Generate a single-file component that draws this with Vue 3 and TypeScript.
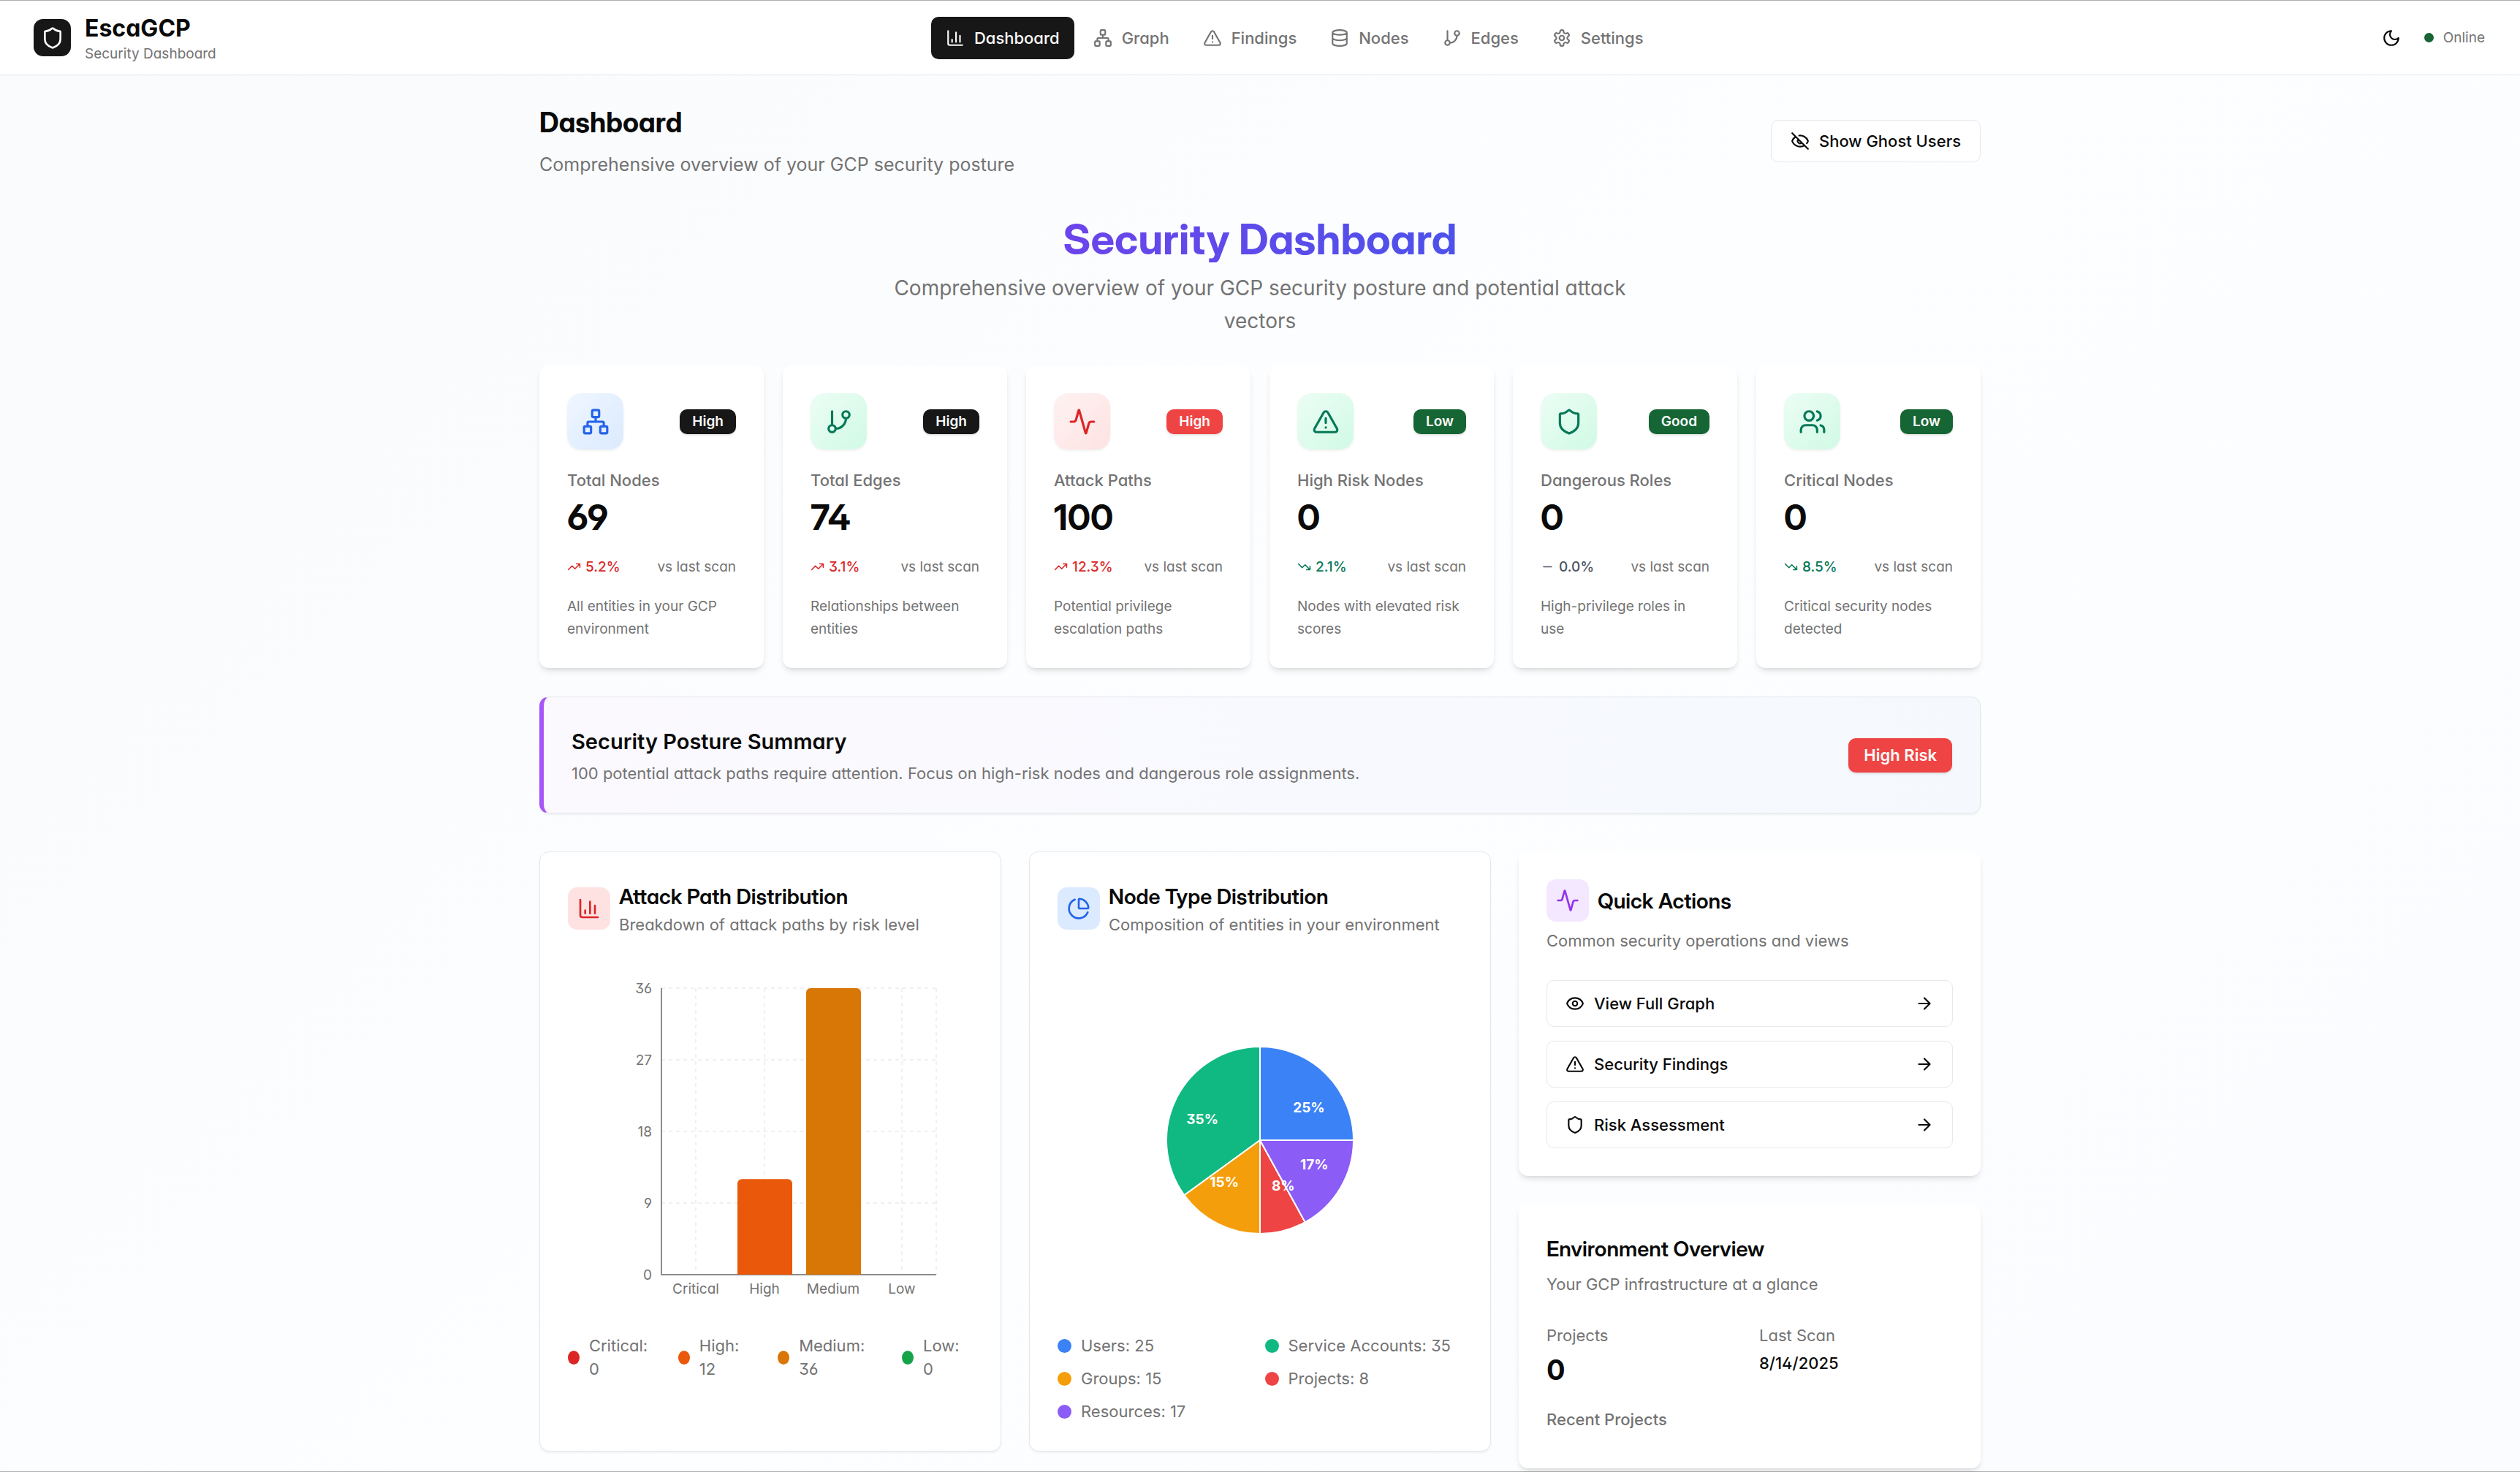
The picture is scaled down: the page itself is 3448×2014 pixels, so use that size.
<script setup lang="ts">
import { h, type FunctionalComponent } from 'vue'

const paths: Record<string, string> = {
  chart: 'M3 3v16a2 2 0 0 0 2 2h16M18 17V9M13 17V5M8 17v-3',
  network:
    'M17 16h4a1 1 0 0 1 1 1v4a1 1 0 0 1-1 1h-4a1 1 0 0 1-1-1v-4a1 1 0 0 1 1-1zM3 16h4a1 1 0 0 1 1 1v4a1 1 0 0 1-1 1H3a1 1 0 0 1-1-1v-4a1 1 0 0 1 1-1zM10 2h4a1 1 0 0 1 1 1v4a1 1 0 0 1-1 1h-4a1 1 0 0 1-1-1V3a1 1 0 0 1 1-1zM5 16v-3a1 1 0 0 1 1-1h12a1 1 0 0 1 1 1v3M12 12V8',
  alert:
    'm21.73 18-8-14a2 2 0 0 0-3.48 0l-8 14A2 2 0 0 0 4 21h16a2 2 0 0 0 1.73-3M12 9v4M12 17h.01',
  database:
    'M3 5a9 3 0 1 0 18 0a9 3 0 1 0-18 0M3 5V19A9 3 0 0 0 21 19V5M3 12A9 3 0 0 0 21 12',
  branch:
    'M6 3v12M15 6a3 3 0 1 0 6 0a3 3 0 1 0-6 0M3 18a3 3 0 1 0 6 0a3 3 0 1 0-6 0M18 9a9 9 0 0 1-9 9',
  settings:
    'M12.22 2h-.44a2 2 0 0 0-2 2v.18a2 2 0 0 1-1 1.73l-.43.25a2 2 0 0 1-2 0l-.15-.08a2 2 0 0 0-2.73.73l-.22.38a2 2 0 0 0 .73 2.73l.15.1a2 2 0 0 1 1 1.72v.51a2 2 0 0 1-1 1.74l-.15.09a2 2 0 0 0-.73 2.73l.22.38a2 2 0 0 0 2.73.73l.15-.08a2 2 0 0 1 2 0l.43.25a2 2 0 0 1 1 1.73V20a2 2 0 0 0 2 2h.44a2 2 0 0 0 2-2v-.18a2 2 0 0 1 1-1.73l.43-.25a2 2 0 0 1 2 0l.15.08a2 2 0 0 0 2.73-.73l.22-.39a2 2 0 0 0-.73-2.73l-.15-.08a2 2 0 0 1-1-1.74v-.5a2 2 0 0 1 1-1.74l.15-.09a2 2 0 0 0 .73-2.73l-.22-.38a2 2 0 0 0-2.73-.73l-.15.08a2 2 0 0 1-2 0l-.43-.25a2 2 0 0 1-1-1.73V4a2 2 0 0 0-2-2zM9 12a3 3 0 1 0 6 0a3 3 0 1 0-6 0',
  shield:
    'M20 13c0 5-3.5 7.5-7.66 8.95a1 1 0 0 1-.67-.01C7.5 20.5 4 18 4 13V6a1 1 0 0 1 1-1c2 0 4.5-1.2 6.24-2.72a1.17 1.17 0 0 1 1.52 0C14.51 3.81 17 5 19 5a1 1 0 0 1 1 1z',
  activity:
    'M22 12h-2.48a2 2 0 0 0-1.93 1.46l-2.35 8.36a.25.25 0 0 1-.48 0L9.24 2.18a.25.25 0 0 0-.48 0l-2.35 8.36A2 2 0 0 1 4.49 12H2',
  users:
    'M16 21v-2a4 4 0 0 0-4-4H6a4 4 0 0 0-4 4v2M5 7a4 4 0 1 0 8 0a4 4 0 1 0-8 0M22 21v-2a4 4 0 0 0-3-3.87M16 3.13a4 4 0 0 1 0 7.75',
  up: 'M16 7h6v6M22 7l-8.5 8.5-5-5L2 17',
  down: 'M16 17h6v-6M22 17l-8.5-8.5-5 5L2 7',
  flat: 'M5 12h14',
  moon: 'M12 3a6 6 0 0 0 9 9 9 9 0 1 1-9-9Z',
  eyeOff:
    'M10.733 5.076a10.744 10.744 0 0 1 11.205 6.575 1 1 0 0 1 0 .696 10.747 10.747 0 0 1-1.444 2.49M14.084 14.158a3 3 0 0 1-4.242-4.242M17.479 17.499a10.75 10.75 0 0 1-15.417-5.151 1 1 0 0 1 0-.696 10.75 10.75 0 0 1 4.446-5.143M2 2l20 20',
  eye: 'M2.062 12.348a1 1 0 0 1 0-.696 10.75 10.75 0 0 1 19.876 0 1 1 0 0 1 0 .696 10.75 10.75 0 0 1-19.876 0M9 12a3 3 0 1 0 6 0a3 3 0 1 0-6 0',
  arrow: 'M5 12h14M12 5l7 7-7 7',
  pie: 'M21 12c.552 0 1.005-.449.95-.998a10 10 0 0 0-8.953-8.951c-.55-.055-.998.398-.998.95v8a1 1 0 0 0 1 1zM21.21 15.89A10 10 0 1 1 8 2.83',
}

const Icon: FunctionalComponent<{ name: string; size: number }> = (props) =>
  h(
    'svg',
    {
      width: props.size,
      height: props.size,
      viewBox: '0 0 24 24',
      fill: 'none',
      stroke: 'currentColor',
      'stroke-width': 2,
      'stroke-linecap': 'round',
      'stroke-linejoin': 'round',
      'aria-hidden': 'true',
    },
    [h('path', { d: paths[props.name] })],
  )
Icon.props = ['name', 'size']

const nav = [
  { icon: 'chart', label: 'Dashboard' },
  { icon: 'network', label: 'Graph' },
  { icon: 'alert', label: 'Findings' },
  { icon: 'database', label: 'Nodes' },
  { icon: 'branch', label: 'Edges' },
  { icon: 'settings', label: 'Settings' },
]

const stats = [
  { icon: 'network', tone: 'blue', badge: 'High', badgeTone: 'dark', label: 'Total Nodes', value: 69, trend: 'up', change: '5.2%', note: 'All entities in your GCP environment' },
  { icon: 'branch', tone: 'green', badge: 'High', badgeTone: 'dark', label: 'Total Edges', value: 74, trend: 'up', change: '3.1%', note: 'Relationships between entities' },
  { icon: 'activity', tone: 'red', badge: 'High', badgeTone: 'danger', label: 'Attack Paths', value: 100, trend: 'up', change: '12.3%', note: 'Potential privilege escalation paths' },
  { icon: 'alert', tone: 'green', badge: 'Low', badgeTone: 'good', label: 'High Risk Nodes', value: 0, trend: 'down', change: '2.1%', note: 'Nodes with elevated risk scores' },
  { icon: 'shield', tone: 'green', badge: 'Good', badgeTone: 'good', label: 'Dangerous Roles', value: 0, trend: 'flat', change: '0.0%', note: 'High-privilege roles in use' },
  { icon: 'users', tone: 'green', badge: 'Low', badgeTone: 'good', label: 'Critical Nodes', value: 0, trend: 'down', change: '8.5%', note: 'Critical security nodes detected' },
]

const risks = [
  { name: 'Critical', value: 0, color: '#dc2626' },
  { name: 'High', value: 12, color: '#ea580c' },
  { name: 'Medium', value: 36, color: '#d97706' },
  { name: 'Low', value: 0, color: '#16a34a' },
]

const plot = { left: 128, right: 504, top: 32, bottom: 424 }
const band = (plot.right - plot.left) / risks.length
const yOf = (v: number) => plot.bottom - (v / 36) * (plot.bottom - plot.top)
const ticks = [36, 27, 18, 9, 0]
const bars = risks.map((r, i) => {
  const center = plot.left + band * (i + 0.5)
  const x0 = center - 37
  const x1 = center + 38
  const y = yOf(r.value)
  const d = r.value
    ? `M${x0} ${plot.bottom}V${y + 6}a6 6 0 0 1 6-6H${x1 - 6}a6 6 0 0 1 6 6V${plot.bottom}z`
    : ''
  return { ...r, center, d }
})

const nodeTypes = [
  { name: 'Users', value: 25, color: '#3b82f6' },
  { name: 'Service Accounts', value: 35, color: '#10b981' },
  { name: 'Groups', value: 15, color: '#f59e0b' },
  { name: 'Projects', value: 8, color: '#ef4444' },
  { name: 'Resources', value: 17, color: '#8b5cf6' },
]

const pie = { cx: 277, cy: 240, r: 128 }
const polar = (percent: number, r: number) => {
  const a = (percent / 100) * Math.PI * 2
  return { x: pie.cx + r * Math.cos(a), y: pie.cy - r * Math.sin(a) }
}
let turned = 0
const slices = nodeTypes.map((n) => {
  const from = polar(turned, pie.r)
  const mid = polar(turned + n.value / 2, pie.r / 2)
  turned += n.value
  const to = polar(turned, pie.r)
  return {
    ...n,
    d: `M${pie.cx} ${pie.cy}L${from.x} ${from.y}A${pie.r} ${pie.r} 0 0 0 ${to.x} ${to.y}Z`,
    mid,
    anchor: mid.x > pie.cx ? 'start' : 'end',
  }
})

const actions = [
  { icon: 'eye', label: 'View Full Graph' },
  { icon: 'alert', label: 'Security Findings' },
  { icon: 'shield', label: 'Risk Assessment' },
]
</script>

<template>
  <div class="app">
    <header class="topbar">
      <div class="brand">
        <span class="brand-mark"><Icon name="shield" :size="32" /></span>
        <div>
          <div class="brand-name">EscaGCP</div>
          <div class="brand-sub">Security Dashboard</div>
        </div>
      </div>
      <nav class="nav">
        <a v-for="(n, i) in nav" :key="n.label" href="#" class="nav-link" :class="{ active: i === 0 }">
          <Icon :name="n.icon" :size="26" />{{ n.label }}
        </a>
      </nav>
      <div class="status-group">
        <button class="theme" type="button" aria-label="Toggle theme"><Icon name="moon" :size="26" /></button>
        <div class="status"><span class="status-dot"></span>Online</div>
      </div>
    </header>

    <main class="main">
      <div class="page-head">
        <div>
          <h1 class="page-title">Dashboard</h1>
          <p class="page-sub">Comprehensive overview of your GCP security posture</p>
        </div>
        <button class="ghost" type="button"><Icon name="eyeOff" :size="26" />Show Ghost Users</button>
      </div>

      <div class="hero">
        <h2 class="hero-title">Security Dashboard</h2>
        <p class="hero-sub">Comprehensive overview of your GCP security posture and potential attack vectors</p>
      </div>

      <section class="stats">
        <article v-for="s in stats" :key="s.label" class="stat raised">
          <div class="stat-top">
            <span class="stat-icon" :class="s.tone"><Icon :name="s.icon" :size="38" /></span>
            <span class="badge" :class="s.badgeTone">{{ s.badge }}</span>
          </div>
          <p class="stat-label">{{ s.label }}</p>
          <p class="stat-value">{{ s.value }}</p>
          <div class="stat-trend">
            <span class="change" :class="s.trend"><Icon :name="s.trend" :size="19" />{{ s.change }}</span>
            <span>vs last scan</span>
          </div>
          <p class="stat-note">{{ s.note }}</p>
        </article>
      </section>

      <section class="summary">
        <div>
          <h3 class="title">Security Posture Summary</h3>
          <p class="summary-text">100 potential attack paths require attention. Focus on high-risk nodes and dangerous role assignments.</p>
        </div>
        <span class="badge large danger">High Risk</span>
      </section>

      <section class="columns">
        <div class="charts">
          <article class="panel outlined">
            <header class="panel-head">
              <span class="panel-icon rose"><Icon name="chart" :size="32" /></span>
              <div>
                <h3 class="title display">Attack Path Distribution</h3>
                <p class="muted">Breakdown of attack paths by risk level</p>
              </div>
            </header>
            <svg class="chart" viewBox="0 0 554 480" role="img" aria-label="Attack paths by risk level">
              <g class="grid">
                <line v-for="t in ticks.slice(0, 4)" :key="t" :x1="plot.left" :x2="plot.right" :y1="yOf(t)" :y2="yOf(t)" />
                <line v-for="b in bars" :key="b.name" :x1="b.center" :x2="b.center" :y1="plot.top" :y2="plot.bottom" />
                <line :x1="plot.right" :x2="plot.right" :y1="plot.top" :y2="plot.bottom" />
              </g>
              <path class="axis" :d="`M${plot.left} ${plot.top}V${plot.bottom}H${plot.right}`" />
              <path v-for="b in bars" :key="b.name" :d="b.d" :fill="b.color" />
              <text v-for="t in ticks" :key="t" class="tick" :x="plot.left - 13" :y="yOf(t) + 7" text-anchor="end">{{ t }}</text>
              <text v-for="b in bars" :key="b.name" class="tick" :x="b.center" :y="plot.bottom + 26" text-anchor="middle">{{ b.name }}</text>
            </svg>
            <ul class="legend row">
              <li v-for="r in risks" :key="r.name">
                <span class="dot" :style="{ background: r.color }"></span><span>{{ r.name }}: {{ r.value }}</span>
              </li>
            </ul>
          </article>

          <article class="panel outlined">
            <header class="panel-head">
              <span class="panel-icon sky"><Icon name="pie" :size="32" /></span>
              <div>
                <h3 class="title display">Node Type Distribution</h3>
                <p class="muted">Composition of entities in your environment</p>
              </div>
            </header>
            <svg class="chart" viewBox="0 0 554 480" role="img" aria-label="Entities by type">
              <path v-for="s in slices" :key="s.name" class="slice" :d="s.d" :fill="s.color" />
              <text v-for="s in slices" :key="s.name" class="slice-label" :x="s.mid.x" :y="s.mid.y + 7" :text-anchor="s.anchor">{{ s.value }}%</text>
            </svg>
            <ul class="legend pair">
              <li v-for="n in nodeTypes" :key="n.name">
                <span class="dot" :style="{ background: n.color }"></span><span>{{ n.name }}: {{ n.value }}</span>
              </li>
            </ul>
          </article>
        </div>

        <div class="side">
          <article class="panel raised">
            <header class="side-head">
              <div class="side-title">
                <span class="panel-icon violet"><Icon name="activity" :size="32" /></span>
                <h3 class="title display">Quick Actions</h3>
              </div>
              <p class="muted">Common security operations and views</p>
            </header>
            <div class="actions">
              <button v-for="a in actions" :key="a.label" class="action" type="button">
                <Icon :name="a.icon" :size="26" /><span class="action-label">{{ a.label }}</span><Icon name="arrow" :size="26" />
              </button>
            </div>
          </article>

          <article class="panel raised">
            <header class="side-head">
              <h3 class="title display">Environment Overview</h3>
              <p class="muted">Your GCP infrastructure at a glance</p>
            </header>
            <dl class="facts">
              <div>
                <dt>Projects</dt>
                <dd class="count">0</dd>
              </div>
              <div>
                <dt>Last Scan</dt>
                <dd class="date">8/14/2025</dd>
              </div>
            </dl>
            <p class="recent">Recent Projects</p>
          </article>
        </div>
      </section>
    </main>
  </div>
</template>

<style>
body {
  margin: 0;
}
</style>

<style scoped>
.app {
  box-sizing: border-box;
  min-height: 100vh;
  border-top: 1px solid #b0b0b0;
  border-bottom: 1px solid #b0b0b0;
  background: linear-gradient(135deg, #f8fafc 0%, #fdfeff 50%, #fafcff 100%);
  color: #0a0a0a;
  font-family: Inter, 'Liberation Sans', sans-serif;
  font-feature-settings: 'cv11', 'ss01';
  font-size: 22px;
  line-height: 32px;
}
.app * {
  box-sizing: border-box;
}
h1, h2, h3, p, ul, dl, dd {
  margin: 0;
  padding: 0;
}
svg {
  flex-shrink: 0;
}
button {
  font: inherit;
  font-feature-settings: inherit;
  color: inherit;
  cursor: pointer;
}

.topbar {
  display: flex;
  align-items: center;
  justify-content: space-between;
  height: 102px;
  padding: 0 48px 0 46px;
  background: #fff;
  border-bottom: 1px solid #e5e7eb;
}
.brand {
  display: flex;
  align-items: center;
  gap: 19px;
}
.brand-mark {
  display: grid;
  place-items: center;
  width: 51px;
  height: 51px;
  border-radius: 13px;
  background: #171717;
  color: #fff;
}
.brand-name {
  font-size: 32px;
  font-weight: 700;
  line-height: 44px;
}
.brand-sub {
  font-size: 19px;
  line-height: 26px;
  color: #737373;
}
.nav {
  display: flex;
  gap: 6px;
}
.nav-link {
  display: flex;
  align-items: center;
  gap: 13px;
  height: 58px;
  padding: 0 20px;
  border-radius: 10px;
  color: #737373;
  font-weight: 500;
  text-decoration: none;
}
.nav-link.active {
  background: #171717;
  color: #fafafa;
}
.status-group {
  display: flex;
  align-items: center;
  gap: 19px;
}
.theme {
  display: grid;
  place-items: center;
  width: 51px;
  height: 51px;
  padding: 0;
  border: 0;
  border-radius: 10px;
  background: none;
}
.status {
  display: flex;
  align-items: center;
  gap: 13px;
  font-size: 19px;
  color: #737373;
}
.status-dot {
  width: 13px;
  height: 13px;
  border-radius: 50%;
  background: #166534;
}

.main {
  max-width: 2048px;
  margin: 0 auto;
  padding: 39px 38px 0;
}
.page-head {
  display: flex;
  align-items: center;
  justify-content: space-between;
}
.page-title {
  font-family: 'Inter Display', Inter, 'Liberation Sans', sans-serif;
  font-size: 38px;
  font-weight: 700;
  line-height: 51px;
}
.page-sub {
  margin-top: 13px;
  font-size: 25px;
  line-height: 38px;
  color: #737373;
}
.ghost {
  display: flex;
  align-items: center;
  gap: 13px;
  height: 58px;
  padding: 0 26px;
  border: 1px solid #e5e7eb;
  border-radius: 10px;
  background: #fff;
  font-weight: 500;
}

.hero {
  margin-top: 51px;
  text-align: center;
}
.hero-title {
  font-family: 'Inter Display', Inter, 'Liberation Sans', sans-serif;
  font-size: 58px;
  font-weight: 700;
  line-height: 64px;
  background: linear-gradient(90deg, #9333ea, #2563eb);
  background-clip: text;
  -webkit-background-clip: text;
  color: transparent;
}
.hero-sub {
  max-width: 1075px;
  margin: 13px auto 0;
  font-size: 28px;
  line-height: 45px;
  color: #737373;
}

.stats {
  display: grid;
  grid-template-columns: repeat(6, 1fr);
  gap: 26px;
  margin-top: 38px;
}
.raised {
  background: #fff;
  border-radius: 13px;
  box-shadow: 0 6px 10px -2px rgba(0, 0, 0, 0.1), 0 3px 6px -3px rgba(0, 0, 0, 0.1);
}
.stat {
  padding: 38px;
}
.stat-top {
  display: flex;
  align-items: center;
  justify-content: space-between;
  margin-bottom: 26px;
}
.stat-icon {
  display: grid;
  place-items: center;
  width: 77px;
  height: 77px;
  border-radius: 19px;
  box-shadow: 0 2px 3px rgba(0, 0, 0, 0.06);
}
.stat-icon.blue {
  background: linear-gradient(135deg, #eff6ff, #dbeafe);
  color: #2563eb;
}
.stat-icon.green {
  background: linear-gradient(135deg, #ecfdf5, #d1fae5);
  color: #047857;
}
.stat-icon.red {
  background: linear-gradient(135deg, #fef2f2, #fee2e2);
  color: #dc2626;
}
.badge {
  padding: 4px 17px;
  border-radius: 10px;
  box-shadow: 0 2px 3px rgba(0, 0, 0, 0.1);
  color: #fafafa;
  font-size: 19px;
  font-weight: 600;
  line-height: 26px;
}
.badge.large {
  padding: 8px 21px;
  font-size: 22px;
  line-height: 31px;
}
.dark {
  background: #171717;
}
.danger {
  background: #ef4444;
}
.good {
  background: #166534;
}
.stat-label {
  color: #737373;
  font-weight: 500;
}
.stat-value {
  margin: 6px 0 26px;
  font-family: 'Inter Display', Inter, 'Liberation Sans', sans-serif;
  font-size: 48px;
  font-weight: 700;
  line-height: 58px;
}
.stat-trend {
  display: flex;
  align-items: center;
  justify-content: space-between;
  margin-bottom: 26px;
  color: #737373;
  font-size: 19px;
  line-height: 25px;
}
.change {
  display: flex;
  align-items: center;
  gap: 6px;
  font-weight: 500;
}
.change.up {
  color: #dc2626;
}
.change.down {
  color: #047857;
}
.change.flat {
  color: #4b5563;
}
.stat-note {
  color: #737373;
  font-size: 19px;
  line-height: 31px;
}

.summary {
  display: flex;
  align-items: center;
  justify-content: space-between;
  margin-top: 39px;
  padding: 38px;
  border: 1px solid #e5e7eb;
  border-left: 6px solid #a855f7;
  border-radius: 13px;
  background: linear-gradient(90deg, #fbf9fe, #f5f9fe);
  box-shadow: 0 2px 3px rgba(0, 0, 0, 0.06);
}
.title {
  font-size: 29px;
  font-weight: 600;
  line-height: 45px;
}
.title.display {
  font-family: 'Inter Display', Inter, 'Liberation Sans', sans-serif;
}
.summary-text {
  margin-top: 5px;
  color: #737373;
}

.columns {
  display: grid;
  grid-template-columns: repeat(3, 1fr);
  align-items: start;
  gap: 38px;
  margin-top: 52px;
}
.charts {
  grid-column: span 2;
  display: grid;
  grid-template-columns: repeat(2, 1fr);
  gap: 38px;
}
.side {
  display: grid;
  gap: 39px;
}
.panel {
  min-width: 0;
  padding: 38px;
  border-radius: 13px;
  background: #fff;
}
.outlined {
  border: 1px solid #e5e7eb;
  box-shadow: 0 2px 3px rgba(0, 0, 0, 0.05);
}
.panel-head,
.side-title {
  display: flex;
  align-items: center;
  gap: 12px;
}
.panel-icon {
  display: grid;
  place-items: center;
  flex-shrink: 0;
  width: 58px;
  height: 58px;
  border-radius: 13px;
}
.rose {
  background: #fee2e2;
  color: #dc2626;
}
.sky {
  background: #dbeafe;
  color: #2563eb;
}
.violet {
  background: #f3e8ff;
  color: #9333ea;
}
.muted {
  color: #737373;
}
.chart {
  display: block;
  width: 100%;
  margin-top: 39px;
}
.grid line {
  stroke: #f0f0f0;
  stroke-width: 2;
  stroke-dasharray: 5 5;
}
.axis {
  fill: none;
  stroke: #8c8c8c;
  stroke-width: 2;
}
.tick {
  font-size: 19px;
  fill: #737373;
}
.slice {
  stroke: #fff;
  stroke-width: 2;
}
.slice-label {
  fill: #fff;
  font-size: 19px;
  font-weight: 700;
}
.legend {
  margin-top: 25px;
  color: #737373;
  list-style: none;
}
.legend li {
  display: flex;
  align-items: center;
  gap: 13px;
}
.legend.row {
  display: flex;
  justify-content: center;
  gap: 38px;
  padding-right: 10px;
}
.legend.pair {
  display: grid;
  grid-template-columns: repeat(2, 1fr);
  gap: 13px;
}
.dot {
  width: 19px;
  height: 19px;
  border-radius: 50%;
}

.side-head {
  display: grid;
  gap: 10px;
  margin-bottom: 38px;
}
.actions {
  display: grid;
  gap: 19px;
}
.action {
  display: flex;
  align-items: center;
  gap: 13px;
  height: 64px;
  padding: 0 25px;
  border: 1px solid #e8e8e8;
  border-radius: 10px;
  background: #fff;
  font-weight: 500;
}
.action-label {
  flex: 1;
  text-align: left;
}
.facts {
  display: grid;
  grid-template-columns: repeat(2, 1fr);
  gap: 26px;
}
.facts dt {
  margin-bottom: 6px;
  color: #737373;
}
.count {
  font-size: 38px;
  font-weight: 700;
  line-height: 51px;
}
.date {
  font-weight: 500;
}
.recent {
  margin: 26px 0 13px;
  color: #737373;
  font-weight: 500;
}
</style>
